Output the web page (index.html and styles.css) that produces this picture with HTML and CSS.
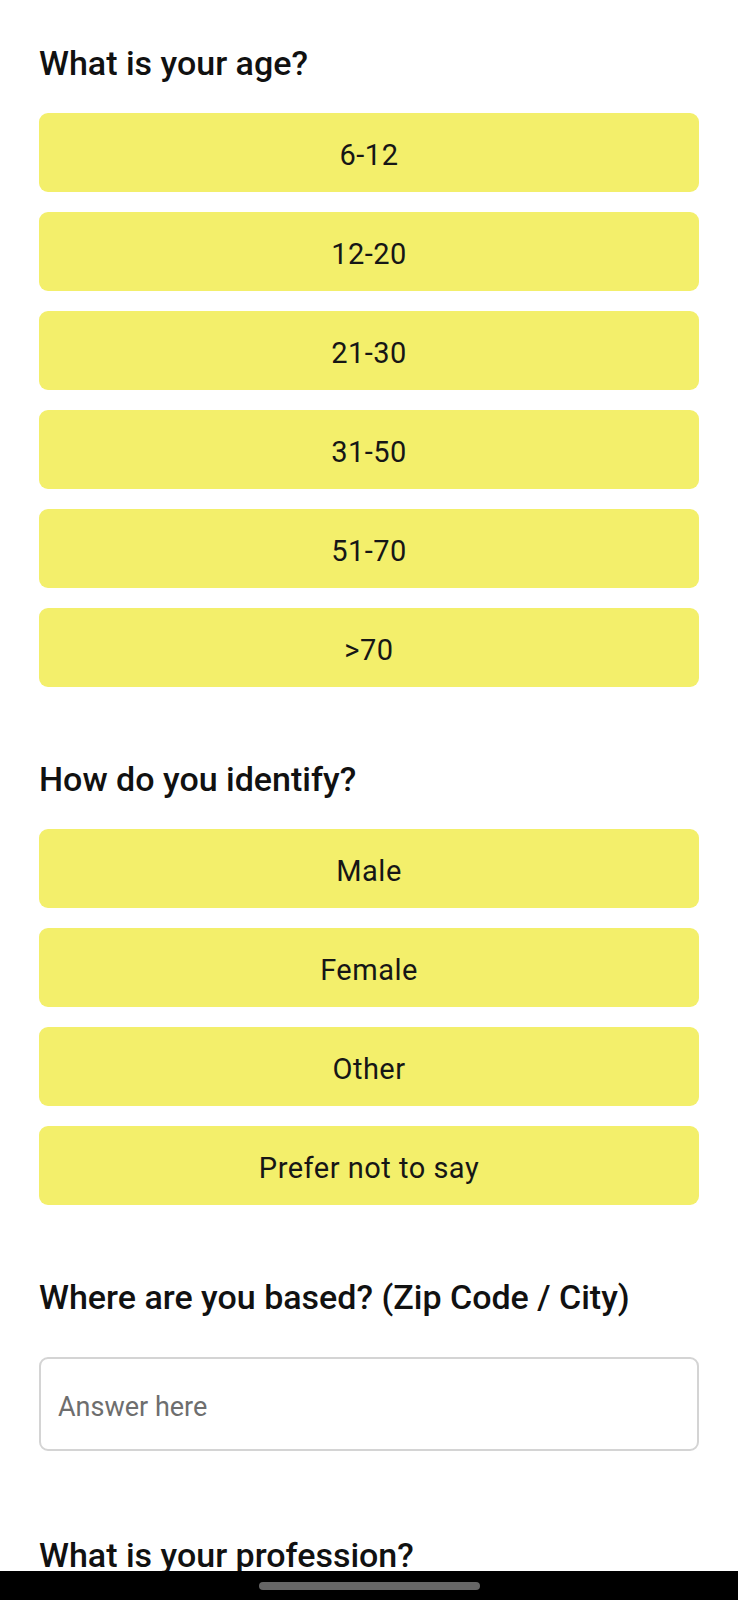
FILE: index.html
```html
<!DOCTYPE html>
<html lang="en">
<head>
<meta charset="utf-8">
<title>Survey</title>
<link rel="stylesheet" href="styles.css">
</head>
<body>
<main class="page">
  <section class="question">
    <h2 class="q-title">What is your age?</h2>
    <div class="options">
      <button class="option">6-12</button>
      <button class="option">12-20</button>
      <button class="option">21-30</button>
      <button class="option">31-50</button>
      <button class="option">51-70</button>
      <button class="option">&gt;70</button>
    </div>
  </section>
  <section class="question">
    <h2 class="q-title">How do you identify?</h2>
    <div class="options">
      <button class="option">Male</button>
      <button class="option">Female</button>
      <button class="option">Other</button>
      <button class="option">Prefer not to say</button>
    </div>
  </section>
  <section class="question question-text">
    <h2 class="q-title">Where are you based? (Zip Code / City)</h2>
    <input class="answer" type="text" placeholder="Answer here">
  </section>
  <section class="question">
    <h2 class="q-title">What is your profession?</h2>
  </section>
</main>
<div class="navbar"><div class="pill"></div></div>
</body>
</html>
```
FILE: styles.css
```css
html, body {
  margin: 0;
  padding: 0;
  background: #ffffff;
}
body {
  font-family: Roboto, "Noto Sans", "Liberation Sans", sans-serif;
  color: #111111;
  height: 1600px;
  overflow: hidden;
}
.page {
  padding: 43px 39px 0;
  display: flex;
  flex-direction: column;
  gap: 72px;
}
.question {
  display: flex;
  flex-direction: column;
}
.q-title {
  margin: 0 0 30px;
  font-size: 34px;
  line-height: 40px;
  font-weight: 500;
  letter-spacing: 0;
  color: #111111;
}
.question-text .q-title {
  margin-bottom: 40px;
}
.question-text {
  margin-bottom: 12px;
}
.options {
  display: flex;
  flex-direction: column;
  gap: 20px;
}
.option {
  display: flex;
  align-items: center;
  justify-content: center;
  height: 79px;
  border: none;
  border-radius: 9px;
  background: #f3ef6b;
  font-family: Roboto, "Noto Sans", "Liberation Sans", sans-serif;
  font-size: 29px;
  letter-spacing: 0.5px;
  color: #161616;
  padding: 4px 0 0;
}
.answer {
  box-sizing: border-box;
  height: 94px;
  width: 100%;
  border: 2px solid #d4d4d4;
  border-radius: 9px;
  padding: 5px 17px 0;
  font-family: Roboto, "Noto Sans", "Liberation Sans", sans-serif;
  font-size: 27px;
  color: #222;
  background: #fff;
  outline: none;
}
.answer::placeholder {
  color: #6e6e6e;
}
.navbar {
  position: fixed;
  left: 0;
  right: 0;
  bottom: 0;
  height: 29px;
  background: #000;
  display: flex;
  justify-content: center;
  align-items: flex-start;
}
.pill {
  margin-top: 11px;
  width: 221px;
  height: 8px;
  border-radius: 4px;
  background: #666666;
}
```
